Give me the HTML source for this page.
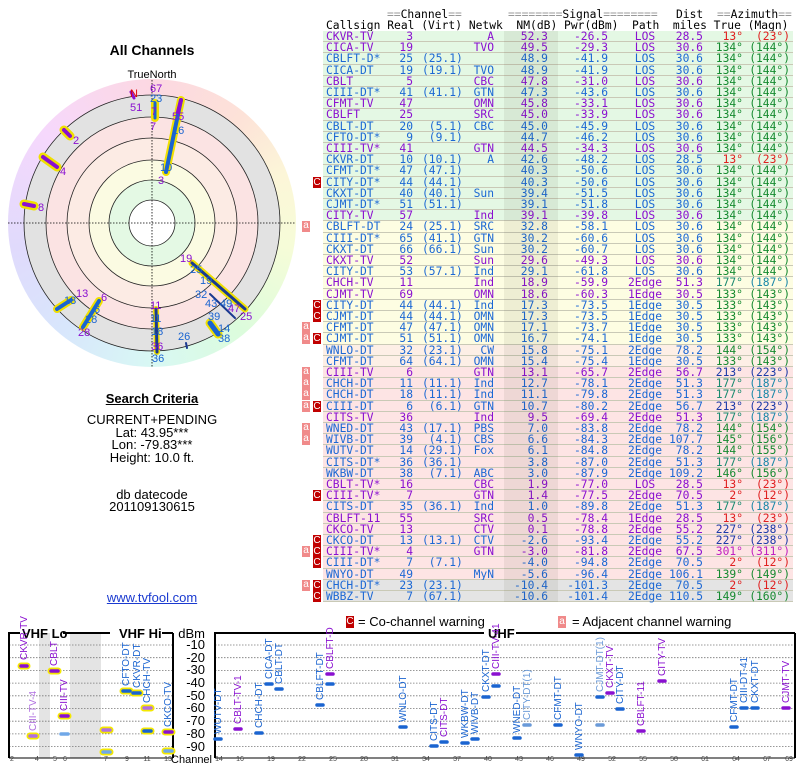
<!DOCTYPE html>
<html><head><meta charset="utf-8">
<style>
*{margin:0;padding:0;box-sizing:border-box}
body{width:800px;height:768px;background:#fff;position:relative;overflow:hidden;font-family:"Liberation Sans",sans-serif;color:#000}
.h{position:absolute;font-family:"DejaVu Sans Mono",monospace;font-size:11.3px;line-height:12px;white-space:pre}
.eq{color:#999}
.r{position:absolute;left:323px;width:470px;height:11.2px;border-bottom:1px solid #c9c9b6;font-family:"DejaVu Sans Mono",monospace;font-size:11.3px;line-height:11px;white-space:pre}
.r span{position:absolute;top:0}
.g{background:#e4f8e4}.y{background:#fdfde2}.o{background:#fdefe6}.k{background:#fde4e4}.x{background:#e4e4e4}
.p{color:#8a10d0}.b{color:#1c68d4}
.c{left:3px}
.re{left:50px;width:40px;text-align:right}
.v{left:99px}
.n{left:131px;width:40px;text-align:right}
.nm{left:185px;width:40px;text-align:right}
.pw{left:230px;width:55px;text-align:right}
.pa{left:297px;width:50px;text-align:center}
.d{left:330px;width:50px;text-align:right}
.t{left:385px;width:35px;text-align:right}
.m{left:420px;width:47px;text-align:right}
.gr .t,.gr .m{color:#168a30}
.rd .t,.rd .m{color:#e02020}
.tl .t{color:#1a8a70}.tl .m{color:#1a88a8}
.db .t,.db .m{color:#1c3aa8}
.mg .t,.mg .m{color:#c020c0}
.fc{position:absolute;left:-10px;top:0;width:8px;height:11px;background:#c00000;color:#fff;font-family:"Liberation Sans",sans-serif;font-size:10px;line-height:11px;text-align:center}
.fa{position:absolute;left:-21px;top:0;width:8px;height:11px;background:#f08a8a;color:#fff;font-family:"Liberation Sans",sans-serif;font-size:10px;line-height:10px;text-align:center}
.t1{position:absolute;left:0;width:304px;text-align:center;font-size:13px;line-height:13px}
</style></head><body>

<div class="h" style="left:387px;top:9px"><span class="eq">==</span>Channel<span class="eq">==</span></div>
<div class="h" style="left:508px;top:9px"><span class="eq">========</span>Signal<span class="eq">========</span></div>
<div class="h" style="left:676px;top:9px">Dist</div>
<div class="h" style="left:717px;top:9px"><span class="eq">==</span>Azimuth<span class="eq">==</span></div>
<div class="h" style="left:326px;top:20px">Callsign Real (Virt) Netwk  NM(dB) Pwr(dBm)  Path  miles True (Magn)</div>

<div class="r g p rd" style="top:31px"><span class="c">CKVR-TV</span><span class="re">3</span><span class="n">A</span><span class="nm">52.3</span><span class="pw">-26.5</span><span class="pa">LOS</span><span class="d">28.5</span><span class="t">13°</span><span class="m">(23°)</span></div>
<div class="r g p gr" style="top:42.2px"><span class="c">CICA-TV</span><span class="re">19</span><span class="n">TVO</span><span class="nm">49.5</span><span class="pw">-29.3</span><span class="pa">LOS</span><span class="d">30.6</span><span class="t">134°</span><span class="m">(144°)</span></div>
<div class="r g b gr" style="top:53.4px"><span class="c">CBLFT-D*</span><span class="re">25</span><span class="v">(25.1)</span><span class="nm">48.9</span><span class="pw">-41.9</span><span class="pa">LOS</span><span class="d">30.6</span><span class="t">134°</span><span class="m">(144°)</span></div>
<div class="r g b gr" style="top:64.6px"><span class="c">CICA-DT</span><span class="re">19</span><span class="v">(19.1)</span><span class="n">TVO</span><span class="nm">48.9</span><span class="pw">-41.9</span><span class="pa">LOS</span><span class="d">30.6</span><span class="t">134°</span><span class="m">(144°)</span></div>
<div class="r g p gr" style="top:75.8px"><span class="c">CBLT</span><span class="re">5</span><span class="n">CBC</span><span class="nm">47.8</span><span class="pw">-31.0</span><span class="pa">LOS</span><span class="d">30.6</span><span class="t">134°</span><span class="m">(144°)</span></div>
<div class="r g b gr" style="top:87px"><span class="c">CIII-DT*</span><span class="re">41</span><span class="v">(41.1)</span><span class="n">GTN</span><span class="nm">47.3</span><span class="pw">-43.6</span><span class="pa">LOS</span><span class="d">30.6</span><span class="t">134°</span><span class="m">(144°)</span></div>
<div class="r g p gr" style="top:98.2px"><span class="c">CFMT-TV</span><span class="re">47</span><span class="n">OMN</span><span class="nm">45.8</span><span class="pw">-33.1</span><span class="pa">LOS</span><span class="d">30.6</span><span class="t">134°</span><span class="m">(144°)</span></div>
<div class="r g p gr" style="top:109.4px"><span class="c">CBLFT</span><span class="re">25</span><span class="n">SRC</span><span class="nm">45.0</span><span class="pw">-33.9</span><span class="pa">LOS</span><span class="d">30.6</span><span class="t">134°</span><span class="m">(144°)</span></div>
<div class="r g b gr" style="top:120.6px"><span class="c">CBLT-DT</span><span class="re">20</span><span class="v"> (5.1)</span><span class="n">CBC</span><span class="nm">45.0</span><span class="pw">-45.9</span><span class="pa">LOS</span><span class="d">30.6</span><span class="t">134°</span><span class="m">(144°)</span></div>
<div class="r g b gr" style="top:131.8px"><span class="c">CFTO-DT*</span><span class="re">9</span><span class="v"> (9.1)</span><span class="nm">44.7</span><span class="pw">-46.2</span><span class="pa">LOS</span><span class="d">30.6</span><span class="t">134°</span><span class="m">(144°)</span></div>
<div class="r g p gr" style="top:143px"><span class="c">CIII-TV*</span><span class="re">41</span><span class="n">GTN</span><span class="nm">44.5</span><span class="pw">-34.3</span><span class="pa">LOS</span><span class="d">30.6</span><span class="t">134°</span><span class="m">(144°)</span></div>
<div class="r g b rd" style="top:154.2px"><span class="c">CKVR-DT</span><span class="re">10</span><span class="v">(10.1)</span><span class="n">A</span><span class="nm">42.6</span><span class="pw">-48.2</span><span class="pa">LOS</span><span class="d">28.5</span><span class="t">13°</span><span class="m">(23°)</span></div>
<div class="r g b gr" style="top:165.4px"><span class="c">CFMT-DT*</span><span class="re">47</span><span class="v">(47.1)</span><span class="nm">40.3</span><span class="pw">-50.6</span><span class="pa">LOS</span><span class="d">30.6</span><span class="t">134°</span><span class="m">(144°)</span></div>
<div class="r g b gr" style="top:176.6px"><span class="fc">C</span><span class="c">CITY-DT*</span><span class="re">44</span><span class="v">(44.1)</span><span class="nm">40.3</span><span class="pw">-50.6</span><span class="pa">LOS</span><span class="d">30.6</span><span class="t">134°</span><span class="m">(144°)</span></div>
<div class="r g b gr" style="top:187.8px"><span class="c">CKXT-DT</span><span class="re">40</span><span class="v">(40.1)</span><span class="n">Sun</span><span class="nm">39.4</span><span class="pw">-51.5</span><span class="pa">LOS</span><span class="d">30.6</span><span class="t">134°</span><span class="m">(144°)</span></div>
<div class="r g b gr" style="top:199px"><span class="c">CJMT-DT*</span><span class="re">51</span><span class="v">(51.1)</span><span class="nm">39.1</span><span class="pw">-51.8</span><span class="pa">LOS</span><span class="d">30.6</span><span class="t">134°</span><span class="m">(144°)</span></div>
<div class="r g p gr" style="top:210.2px"><span class="c">CITY-TV</span><span class="re">57</span><span class="n">Ind</span><span class="nm">39.1</span><span class="pw">-39.8</span><span class="pa">LOS</span><span class="d">30.6</span><span class="t">134°</span><span class="m">(144°)</span></div>
<div class="r y b gr" style="top:221.4px"><span class="fa">a</span><span class="c">CBLFT-DT</span><span class="re">24</span><span class="v">(25.1)</span><span class="n">SRC</span><span class="nm">32.8</span><span class="pw">-58.1</span><span class="pa">LOS</span><span class="d">30.6</span><span class="t">134°</span><span class="m">(144°)</span></div>
<div class="r y b gr" style="top:232.6px"><span class="c">CIII-DT*</span><span class="re">65</span><span class="v">(41.1)</span><span class="n">GTN</span><span class="nm">30.2</span><span class="pw">-60.6</span><span class="pa">LOS</span><span class="d">30.6</span><span class="t">134°</span><span class="m">(144°)</span></div>
<div class="r y b gr" style="top:243.8px"><span class="c">CKXT-DT</span><span class="re">66</span><span class="v">(66.1)</span><span class="n">Sun</span><span class="nm">30.2</span><span class="pw">-60.7</span><span class="pa">LOS</span><span class="d">30.6</span><span class="t">134°</span><span class="m">(144°)</span></div>
<div class="r y p gr" style="top:255px"><span class="c">CKXT-TV</span><span class="re">52</span><span class="n">Sun</span><span class="nm">29.6</span><span class="pw">-49.3</span><span class="pa">LOS</span><span class="d">30.6</span><span class="t">134°</span><span class="m">(144°)</span></div>
<div class="r y b gr" style="top:266.2px"><span class="c">CITY-DT</span><span class="re">53</span><span class="v">(57.1)</span><span class="n">Ind</span><span class="nm">29.1</span><span class="pw">-61.8</span><span class="pa">LOS</span><span class="d">30.6</span><span class="t">134°</span><span class="m">(144°)</span></div>
<div class="r y p tl" style="top:277.4px"><span class="c">CHCH-TV</span><span class="re">11</span><span class="n">Ind</span><span class="nm">18.9</span><span class="pw">-59.9</span><span class="pa">2Edge</span><span class="d">51.3</span><span class="t">177°</span><span class="m">(187°)</span></div>
<div class="r y p gr" style="top:288.6px"><span class="c">CJMT-TV</span><span class="re">69</span><span class="n">OMN</span><span class="nm">18.6</span><span class="pw">-60.3</span><span class="pa">1Edge</span><span class="d">30.5</span><span class="t">133°</span><span class="m">(143°)</span></div>
<div class="r y b gr" style="top:299.8px"><span class="fc">C</span><span class="c">CITY-DT</span><span class="re">44</span><span class="v">(44.1)</span><span class="n">Ind</span><span class="nm">17.3</span><span class="pw">-73.5</span><span class="pa">1Edge</span><span class="d">30.5</span><span class="t">133°</span><span class="m">(143°)</span></div>
<div class="r y b gr" style="top:311px"><span class="fc">C</span><span class="c">CJMT-DT</span><span class="re">44</span><span class="v">(44.1)</span><span class="n">OMN</span><span class="nm">17.3</span><span class="pw">-73.5</span><span class="pa">1Edge</span><span class="d">30.5</span><span class="t">133°</span><span class="m">(143°)</span></div>
<div class="r y b gr" style="top:322.2px"><span class="fa">a</span><span class="c">CFMT-DT</span><span class="re">47</span><span class="v">(47.1)</span><span class="n">OMN</span><span class="nm">17.1</span><span class="pw">-73.7</span><span class="pa">1Edge</span><span class="d">30.5</span><span class="t">133°</span><span class="m">(143°)</span></div>
<div class="r y b gr" style="top:333.4px"><span class="fa">a</span><span class="fc">C</span><span class="c">CJMT-DT</span><span class="re">51</span><span class="v">(51.1)</span><span class="n">OMN</span><span class="nm">16.7</span><span class="pw">-74.1</span><span class="pa">1Edge</span><span class="d">30.5</span><span class="t">133°</span><span class="m">(143°)</span></div>
<div class="r o b gr" style="top:344.6px"><span class="c">WNLO-DT</span><span class="re">32</span><span class="v">(23.1)</span><span class="n">CW</span><span class="nm">15.8</span><span class="pw">-75.1</span><span class="pa">2Edge</span><span class="d">78.2</span><span class="t">144°</span><span class="m">(154°)</span></div>
<div class="r o b gr" style="top:355.8px"><span class="c">CFMT-DT</span><span class="re">64</span><span class="v">(64.1)</span><span class="n">OMN</span><span class="nm">15.4</span><span class="pw">-75.4</span><span class="pa">1Edge</span><span class="d">30.5</span><span class="t">133°</span><span class="m">(143°)</span></div>
<div class="r k p db" style="top:367px"><span class="fa">a</span><span class="c">CIII-TV</span><span class="re">6</span><span class="n">GTN</span><span class="nm">13.1</span><span class="pw">-65.7</span><span class="pa">2Edge</span><span class="d">56.7</span><span class="t">213°</span><span class="m">(223°)</span></div>
<div class="r k b tl" style="top:378.2px"><span class="fa">a</span><span class="c">CHCH-DT</span><span class="re">11</span><span class="v">(11.1)</span><span class="n">Ind</span><span class="nm">12.7</span><span class="pw">-78.1</span><span class="pa">2Edge</span><span class="d">51.3</span><span class="t">177°</span><span class="m">(187°)</span></div>
<div class="r k b tl" style="top:389.4px"><span class="fa">a</span><span class="c">CHCH-DT</span><span class="re">18</span><span class="v">(11.1)</span><span class="n">Ind</span><span class="nm">11.1</span><span class="pw">-79.8</span><span class="pa">2Edge</span><span class="d">51.3</span><span class="t">177°</span><span class="m">(187°)</span></div>
<div class="r k b db" style="top:400.6px"><span class="fa">a</span><span class="fc">C</span><span class="c">CIII-DT</span><span class="re">6</span><span class="v"> (6.1)</span><span class="n">GTN</span><span class="nm">10.7</span><span class="pw">-80.2</span><span class="pa">2Edge</span><span class="d">56.7</span><span class="t">213°</span><span class="m">(223°)</span></div>
<div class="r k p tl" style="top:411.8px"><span class="c">CITS-TV</span><span class="re">36</span><span class="n">Ind</span><span class="nm">9.5</span><span class="pw">-69.4</span><span class="pa">2Edge</span><span class="d">51.3</span><span class="t">177°</span><span class="m">(187°)</span></div>
<div class="r k b gr" style="top:423px"><span class="fa">a</span><span class="c">WNED-DT</span><span class="re">43</span><span class="v">(17.1)</span><span class="n">PBS</span><span class="nm">7.0</span><span class="pw">-83.8</span><span class="pa">2Edge</span><span class="d">78.2</span><span class="t">144°</span><span class="m">(154°)</span></div>
<div class="r k b gr" style="top:434.2px"><span class="fa">a</span><span class="c">WIVB-DT</span><span class="re">39</span><span class="v"> (4.1)</span><span class="n">CBS</span><span class="nm">6.6</span><span class="pw">-84.3</span><span class="pa">2Edge</span><span class="d">107.7</span><span class="t">145°</span><span class="m">(156°)</span></div>
<div class="r k b gr" style="top:445.4px"><span class="c">WUTV-DT</span><span class="re">14</span><span class="v">(29.1)</span><span class="n">Fox</span><span class="nm">6.1</span><span class="pw">-84.8</span><span class="pa">2Edge</span><span class="d">78.2</span><span class="t">144°</span><span class="m">(155°)</span></div>
<div class="r k b tl" style="top:456.6px"><span class="c">CITS-DT*</span><span class="re">36</span><span class="v">(36.1)</span><span class="nm">3.8</span><span class="pw">-87.0</span><span class="pa">2Edge</span><span class="d">51.3</span><span class="t">177°</span><span class="m">(187°)</span></div>
<div class="r k b gr" style="top:467.8px"><span class="c">WKBW-DT</span><span class="re">38</span><span class="v"> (7.1)</span><span class="n">ABC</span><span class="nm">3.0</span><span class="pw">-87.9</span><span class="pa">2Edge</span><span class="d">109.2</span><span class="t">146°</span><span class="m">(156°)</span></div>
<div class="r k p rd" style="top:479px"><span class="c">CBLT-TV*</span><span class="re">16</span><span class="n">CBC</span><span class="nm">1.9</span><span class="pw">-77.0</span><span class="pa">LOS</span><span class="d">28.5</span><span class="t">13°</span><span class="m">(23°)</span></div>
<div class="r k p rd" style="top:490.2px"><span class="fc">C</span><span class="c">CIII-TV*</span><span class="re">7</span><span class="n">GTN</span><span class="nm">1.4</span><span class="pw">-77.5</span><span class="pa">2Edge</span><span class="d">70.5</span><span class="t">2°</span><span class="m">(12°)</span></div>
<div class="r k b tl" style="top:501.4px"><span class="c">CITS-DT</span><span class="re">35</span><span class="v">(36.1)</span><span class="n">Ind</span><span class="nm">1.0</span><span class="pw">-89.8</span><span class="pa">2Edge</span><span class="d">51.3</span><span class="t">177°</span><span class="m">(187°)</span></div>
<div class="r k p rd" style="top:512.6px"><span class="c">CBLFT-11</span><span class="re">55</span><span class="n">SRC</span><span class="nm">0.5</span><span class="pw">-78.4</span><span class="pa">1Edge</span><span class="d">28.5</span><span class="t">13°</span><span class="m">(23°)</span></div>
<div class="r k p db" style="top:523.8px"><span class="c">CKCO-TV</span><span class="re">13</span><span class="n">CTV</span><span class="nm">0.1</span><span class="pw">-78.8</span><span class="pa">2Edge</span><span class="d">55.2</span><span class="t">227°</span><span class="m">(238°)</span></div>
<div class="r k b db" style="top:535px"><span class="fc">C</span><span class="c">CKCO-DT</span><span class="re">13</span><span class="v">(13.1)</span><span class="n">CTV</span><span class="nm">-2.6</span><span class="pw">-93.4</span><span class="pa">2Edge</span><span class="d">55.2</span><span class="t">227°</span><span class="m">(238°)</span></div>
<div class="r k p mg" style="top:546.2px"><span class="fa">a</span><span class="fc">C</span><span class="c">CIII-TV*</span><span class="re">4</span><span class="n">GTN</span><span class="nm">-3.0</span><span class="pw">-81.8</span><span class="pa">2Edge</span><span class="d">67.5</span><span class="t">301°</span><span class="m">(311°)</span></div>
<div class="r k b rd" style="top:557.4px"><span class="fc">C</span><span class="c">CIII-DT*</span><span class="re">7</span><span class="v"> (7.1)</span><span class="nm">-4.0</span><span class="pw">-94.8</span><span class="pa">2Edge</span><span class="d">70.5</span><span class="t">2°</span><span class="m">(12°)</span></div>
<div class="r k b gr" style="top:568.6px"><span class="c">WNYO-DT</span><span class="re">49</span><span class="n">MyN</span><span class="nm">-5.6</span><span class="pw">-96.4</span><span class="pa">2Edge</span><span class="d">106.1</span><span class="t">139°</span><span class="m">(149°)</span></div>
<div class="r x b rd" style="top:579.8px"><span class="fa">a</span><span class="fc">C</span><span class="c">CHCH-DT*</span><span class="re">23</span><span class="v">(23.1)</span><span class="nm">-10.4</span><span class="pw">-101.3</span><span class="pa">2Edge</span><span class="d">70.5</span><span class="t">2°</span><span class="m">(12°)</span></div>
<div class="r x b gr" style="top:591px"><span class="fc">C</span><span class="c">WBBZ-TV</span><span class="re">7</span><span class="v">(67.1)</span><span class="nm">-10.6</span><span class="pw">-101.4</span><span class="pa">2Edge</span><span class="d">110.5</span><span class="t">149°</span><span class="m">(160°)</span></div>
<div style="position:absolute;left:504px;top:31px;width:54px;height:571px;background:rgba(60,60,40,0.08)"></div>

<div class="t1" style="top:44px;font-weight:bold;font-size:14px">All Channels</div>
<div class="t1" style="top:69px;font-size:11px">TrueNorth</div>
<div style="position:absolute;left:8px;top:79px;width:288px;height:288px;border-radius:50%;background:conic-gradient(#fcd8e2,#fde2d8 40deg,#fcf6d8 70deg,#f6fcd8 100deg,#dcfcdc 140deg,#d8f8f4 180deg,#d8e6fc 220deg,#e0dafc 260deg,#f6d8fc 310deg,#fcd8e2)"></div>
<svg style="position:absolute;left:0;top:0" width="304" height="380">
<circle cx="152" cy="223" r="128" fill="#e2e2e2" stroke="#222" stroke-width="0.8"/>
<circle cx="152" cy="223" r="106" fill="#fbe3e3" stroke="#222" stroke-width="0.8"/>
<circle cx="152" cy="223" r="85" fill="#fcebe4" stroke="#222" stroke-width="0.8"/>
<circle cx="152" cy="223" r="63" fill="#fbfbe2" stroke="#222" stroke-width="0.8"/>
<circle cx="152" cy="223" r="43" fill="#e4f9e4" stroke="#222" stroke-width="0.8"/>
<circle cx="152" cy="223" r="23" fill="#fff" stroke="#222" stroke-width="0.8"/>
<line x1="8" y1="223" x2="296" y2="223" stroke="#000" stroke-width="0.8" stroke-dasharray="1.5,1.5"/>
<line x1="152" y1="80" x2="152" y2="368" stroke="#000" stroke-width="0.8" stroke-dasharray="1.5,1.5"/>
<g stroke-linecap="round">
<line x1="166" y1="172" x2="181" y2="100" stroke="#f0e000" stroke-width="8"/>
<line x1="166" y1="172" x2="181" y2="100" stroke="#1a64d0" stroke-width="4"/>
<line x1="178" y1="112" x2="181" y2="100" stroke="#8a10d0" stroke-width="4"/>
<line x1="155" y1="103" x2="155" y2="118" stroke="#f0e000" stroke-width="8"/>
<line x1="155" y1="103" x2="155" y2="118" stroke="#1a64d0" stroke-width="3"/>
<line x1="64" y1="130" x2="70" y2="136" stroke="#f0e000" stroke-width="9"/>
<line x1="64" y1="130" x2="70" y2="136" stroke="#8a10d0" stroke-width="4"/>
<line x1="43" y1="157" x2="57" y2="167" stroke="#f0e000" stroke-width="9"/>
<line x1="43" y1="157" x2="57" y2="167" stroke="#8a10d0" stroke-width="4"/>
<line x1="24" y1="204" x2="34" y2="206" stroke="#f0e000" stroke-width="9"/>
<line x1="24" y1="204" x2="34" y2="206" stroke="#8a10d0" stroke-width="4"/>
<line x1="57" y1="309" x2="71" y2="300" stroke="#f0e000" stroke-width="8"/>
<line x1="57" y1="309" x2="71" y2="300" stroke="#1a64d0" stroke-width="4"/>
<line x1="83" y1="327" x2="99" y2="301" stroke="#f0e000" stroke-width="8"/>
<line x1="83" y1="327" x2="99" y2="301" stroke="#1a64d0" stroke-width="4"/>
<line x1="156" y1="309" x2="157" y2="352" stroke="#f0e000" stroke-width="6"/>
<line x1="156" y1="309" x2="157" y2="352" stroke="#1a3a90" stroke-width="3"/>
<line x1="192" y1="263" x2="245" y2="309" stroke="#f0e000" stroke-width="7"/>
<line x1="192" y1="263" x2="245" y2="309" stroke="#1a3a90" stroke-width="3"/>
<line x1="210" y1="294" x2="235" y2="318" stroke="#1a3a90" stroke-width="2"/>
<line x1="210" y1="323" x2="218" y2="334" stroke="#f0e000" stroke-width="9"/>
<line x1="210" y1="323" x2="218" y2="334" stroke="#1a64d0" stroke-width="5"/>
<line x1="186" y1="343" x2="187" y2="348" stroke="#1a3a90" stroke-width="2"/>
<line x1="131" y1="92" x2="134" y2="98" stroke="#8a10d0" stroke-width="3"/>
</g>
<g font-family="Liberation Sans,sans-serif" font-size="11">
<text x="130" y="97" fill="#d00">N</text>
<text x="130" y="111" fill="#8a10d0">51</text>
<text x="150" y="92" fill="#8a10d0">67</text><text x="150" y="102" fill="#1a64d0">23</text>
<text x="150" y="130" fill="#8a10d0">7</text><text x="151" y="115" fill="#8a10d0">7</text>
<text x="172" y="120" fill="#8a10d0">55</text><text x="172" y="134" fill="#1a64d0">16</text>
<text x="160" y="171" fill="#1a64d0">10</text><text x="158" y="184" fill="#8a10d0">3</text>
<text x="73" y="144" fill="#8a10d0">2</text><text x="60" y="175" fill="#8a10d0">4</text><text x="38" y="211" fill="#8a10d0">8</text>
<text x="180" y="262" fill="#8a10d0">19</text><text x="190" y="273" fill="#1a64d0">25</text><text x="200" y="284" fill="#1a64d0">19</text>
<text x="195" y="298" fill="#1a64d0">32</text><text x="205" y="307" fill="#1a64d0">43</text><text x="220" y="307" fill="#1a64d0">49</text>
<text x="228" y="312" fill="#8a10d0">47</text><text x="240" y="320" fill="#8a10d0">25</text>
<text x="208" y="320" fill="#1a64d0">39</text><text x="218" y="332" fill="#1a64d0">14</text><text x="218" y="342" fill="#1a64d0">38</text>
<text x="76" y="297" fill="#8a10d0">13</text><text x="64" y="304" fill="#1a64d0">13</text>
<text x="101" y="301" fill="#8a10d0">6</text><text x="94" y="313" fill="#1a64d0">6</text><text x="85" y="323" fill="#1a64d0">28</text><text x="78" y="336" fill="#8a10d0">28</text>
<text x="150" y="309" fill="#8a10d0">11</text><text x="150" y="322" fill="#1a64d0">11</text><text x="151" y="335" fill="#1a64d0">18</text>
<text x="151" y="350" fill="#8a10d0">36</text><text x="152" y="362" fill="#1a64d0">36</text>
<text x="178" y="340" fill="#1a64d0">26</text>
</g>
</svg>

<div class="t1" style="top:392px;font-weight:bold;text-decoration:underline">Search Criteria</div>
<div class="t1" style="top:413px">CURRENT+PENDING</div>
<div class="t1" style="top:426px">Lat: 43.95***</div>
<div class="t1" style="top:438px">Lon: -79.83***</div>
<div class="t1" style="top:451px">Height: 10.0 ft.</div>
<div class="t1" style="top:488px">db datecode</div>
<div class="t1" style="top:500px">201109130615</div>
<div class="t1" style="top:591px;color:#1a3ad0;text-decoration:underline">www.tvfool.com</div>

<div style="position:absolute;left:346px;top:616px;width:8px;height:12px;background:#c00000;color:#fff;font-size:10px;text-align:center;line-height:12px">C</div>
<div style="position:absolute;left:358px;top:614px;font-size:13px">= Co-channel warning</div>
<div style="position:absolute;left:558px;top:616px;width:8px;height:12px;background:#f08a8a;color:#fff;font-size:10px;text-align:center;line-height:11px">a</div>
<div style="position:absolute;left:572px;top:614px;font-size:13px">= Adjacent channel warning</div>

<svg style="position:absolute;left:0;top:600px" width="800" height="168" font-family="Liberation Sans,sans-serif">
<rect x="39" y="33" width="11" height="125" fill="#e4e4e4"/>
<rect x="70" y="33" width="31" height="125" fill="#e4e4e4"/>
<g stroke="#777" stroke-width="0.8" stroke-dasharray="1.5,1.5">
<line x1="9" y1="45" x2="172" y2="45"/><line x1="9" y1="57.7" x2="172" y2="57.7"/><line x1="9" y1="70.4" x2="172" y2="70.4"/><line x1="9" y1="83.1" x2="172" y2="83.1"/><line x1="9" y1="95.8" x2="172" y2="95.8"/><line x1="9" y1="108.5" x2="172" y2="108.5"/><line x1="9" y1="121.2" x2="172" y2="121.2"/><line x1="9" y1="133.9" x2="172" y2="133.9"/><line x1="9" y1="146.6" x2="172" y2="146.6"/>
<line x1="215" y1="45" x2="794" y2="45"/><line x1="215" y1="57.7" x2="794" y2="57.7"/><line x1="215" y1="70.4" x2="794" y2="70.4"/><line x1="215" y1="83.1" x2="794" y2="83.1"/><line x1="215" y1="95.8" x2="794" y2="95.8"/><line x1="215" y1="108.5" x2="794" y2="108.5"/><line x1="215" y1="121.2" x2="794" y2="121.2"/><line x1="215" y1="133.9" x2="794" y2="133.9"/><line x1="215" y1="146.6" x2="794" y2="146.6"/>
</g>
<g stroke="#000" stroke-width="2" fill="none">
<polyline points="9,158 9,33 20,33"/><line x1="63" y1="33" x2="110" y2="33"/><line x1="162" y1="33" x2="173" y2="33"/><line x1="173" y1="33" x2="173" y2="158"/>
<polyline points="215,158 215,33 484,33"/><line x1="516" y1="33" x2="795" y2="33"/><line x1="795" y1="33" x2="795" y2="158"/>
<line x1="9" y1="158" x2="173" y2="158" stroke-width="1"/><line x1="215" y1="158" x2="795" y2="158" stroke-width="1"/>
</g>
<g font-weight="bold" font-size="13"><text x="22" y="38">VHF Lo</text><text x="119" y="38">VHF Hi</text><text x="488" y="38">UHF</text></g>
<g font-size="13" text-anchor="end"><text x="205" y="38">dBm</text><text x="205" y="49">-10</text><text x="205" y="62">-20</text><text x="205" y="74">-30</text><text x="205" y="87">-40</text><text x="205" y="100">-50</text><text x="205" y="112">-60</text><text x="205" y="125">-70</text><text x="205" y="138">-80</text><text x="205" y="151">-90</text><text x="212" y="163" font-size="11">Channel</text></g>
<g font-size="7" fill="#444" text-anchor="middle">
<text x="12" y="161">2</text><text x="37" y="161">4</text><text x="55" y="161">5</text><text x="65" y="161">6</text><text x="106" y="161">7</text><text x="127" y="161">9</text><text x="147" y="161">11</text><text x="168" y="161">13</text>
<text x="219" y="161">14</text><text x="240" y="161">16</text><text x="271" y="161">19</text><text x="302" y="161">22</text><text x="333" y="161">25</text><text x="364" y="161">28</text><text x="395" y="161">31</text><text x="426" y="161">34</text><text x="457" y="161">37</text><text x="488" y="161">40</text><text x="519" y="161">43</text><text x="550" y="161">46</text><text x="581" y="161">49</text><text x="612" y="161">52</text><text x="643" y="161">55</text><text x="674" y="161">58</text><text x="705" y="161">61</text><text x="736" y="161">64</text><text x="767" y="161">67</text><text x="789" y="161">69</text>
</g>
<g stroke-linecap="round">
<g stroke="#f4e800" stroke-width="7">
<line x1="21" y1="66" x2="27" y2="66"/><line x1="51" y1="71" x2="58" y2="71"/><line x1="61" y1="116" x2="68" y2="116"/><line x1="30" y1="136" x2="36" y2="136"/><line x1="103" y1="152" x2="110" y2="152"/><line x1="103" y1="130" x2="110" y2="130"/><line x1="123" y1="91" x2="130" y2="91"/><line x1="133" y1="93" x2="140" y2="93"/><line x1="144" y1="108" x2="151" y2="108"/><line x1="144" y1="131" x2="151" y2="131"/><line x1="165" y1="132" x2="172" y2="132"/><line x1="165" y1="151" x2="172" y2="151"/>
</g>
<g stroke-width="3.5">
<line x1="21" y1="66" x2="27" y2="66" stroke="#8a10d0"/><line x1="51" y1="71" x2="58" y2="71" stroke="#8a10d0"/><line x1="61" y1="116" x2="68" y2="116" stroke="#8a10d0"/><line x1="30" y1="136" x2="36" y2="136" stroke="#b070e0"/><line x1="61" y1="134" x2="68" y2="134" stroke="#70a8e8"/><line x1="103" y1="152" x2="110" y2="152" stroke="#70a8e8"/><line x1="103" y1="130" x2="110" y2="130" stroke="#b070e0"/><line x1="123" y1="91" x2="130" y2="91" stroke="#1a64d0"/><line x1="133" y1="93" x2="140" y2="93" stroke="#1a64d0"/><line x1="144" y1="108" x2="151" y2="108" stroke="#b070e0"/><line x1="144" y1="131" x2="151" y2="131" stroke="#1a64d0"/><line x1="165" y1="132" x2="172" y2="132" stroke="#8a10d0"/><line x1="165" y1="151" x2="172" y2="151" stroke="#70a8e8"/>
<g stroke="#1a64d0">
<line x1="215" y1="139" x2="221" y2="139"/><line x1="256" y1="133" x2="262" y2="133"/><line x1="266" y1="84" x2="272" y2="84"/><line x1="276" y1="89" x2="282" y2="89"/><line x1="317" y1="105" x2="323" y2="105"/><line x1="327" y1="84" x2="333" y2="84"/><line x1="400" y1="127" x2="406" y2="127"/><line x1="431" y1="146" x2="437" y2="146"/><line x1="441" y1="142" x2="447" y2="142"/><line x1="462" y1="143" x2="468" y2="143"/><line x1="472" y1="139" x2="478" y2="139"/><line x1="483" y1="97" x2="489" y2="97"/><line x1="493" y1="86" x2="499" y2="86"/><line x1="514" y1="138" x2="520" y2="138"/><line x1="555" y1="125" x2="561" y2="125"/><line x1="576" y1="155" x2="582" y2="155"/><line x1="597" y1="97" x2="603" y2="97"/><line x1="617" y1="109" x2="623" y2="109"/><line x1="731" y1="127" x2="737" y2="127"/><line x1="741" y1="108" x2="747" y2="108"/><line x1="752" y1="108" x2="758" y2="108"/>
</g>
<g stroke="#6a9ad8"><line x1="524" y1="125" x2="530" y2="125"/><line x1="597" y1="125" x2="603" y2="125"/></g>
<g stroke="#8a10d0">
<line x1="235" y1="129" x2="241" y2="129"/><line x1="327" y1="74" x2="333" y2="74"/><line x1="493" y1="74" x2="499" y2="74"/><line x1="607" y1="93" x2="613" y2="93"/><line x1="638" y1="131" x2="644" y2="131"/><line x1="659" y1="81" x2="665" y2="81"/><line x1="783" y1="108" x2="789" y2="108"/>
</g>
</g>
</g>
<g font-size="10">
<text transform="translate(27,60) rotate(-90)" fill="#8a10d0">CKVR-TV</text>
<text transform="translate(57,66) rotate(-90)" fill="#8a10d0">CBLT</text>
<text transform="translate(67,111) rotate(-90)" fill="#8a10d0">CIII-TV</text>
<text transform="translate(36,131) rotate(-90)" fill="#b070e0">CIII-TV-4</text>
<text transform="translate(129,86) rotate(-90)" fill="#1a64d0">CFTO-DT</text>
<text transform="translate(140,88) rotate(-90)" fill="#1a64d0">CKVR-DT</text>
<text transform="translate(150,103) rotate(-90)" fill="#1a64d0">CHCH-TV</text>
<text transform="translate(171,127) rotate(-90)" fill="#1a64d0">CKCO-TV</text>
<text transform="translate(221,134) rotate(-90)" fill="#1a64d0">WUTV-DT</text>
<text transform="translate(241,124) rotate(-90)" fill="#8a10d0">CBLT-TV-1</text>
<text transform="translate(262,128) rotate(-90)" fill="#1a64d0">CHCH-DT</text>
<text transform="translate(272,79) rotate(-90)" fill="#1a64d0">CICA-DT</text>
<text transform="translate(282,84) rotate(-90)" fill="#1a64d0">CBLT-DT</text>
<text transform="translate(323,100) rotate(-90)" fill="#1a64d0">CBLFT-DT</text>
<text transform="translate(333,69) rotate(-90)" fill="#8a10d0">CBLFT-D</text>
<text transform="translate(406,122) rotate(-90)" fill="#1a64d0">WNLO-DT</text>
<text transform="translate(437,141) rotate(-90)" fill="#1a64d0">CITS-DT</text>
<text transform="translate(447,137) rotate(-90)" fill="#8a10d0">CITS-DT</text>
<text transform="translate(468,138) rotate(-90)" fill="#1a64d0">WKBW-DT</text>
<text transform="translate(478,134) rotate(-90)" fill="#1a64d0">WIVB-DT</text>
<text transform="translate(489,92) rotate(-90)" fill="#1a64d0">CKXT-DT</text>
<text transform="translate(499,69) rotate(-90)" fill="#8a10d0">CIII-TV-41</text>
<text transform="translate(520,133) rotate(-90)" fill="#1a64d0">WNED-DT</text>
<text transform="translate(530,120) rotate(-90)" fill="#6a9ad8">CITY-DT(1)</text>
<text transform="translate(561,120) rotate(-90)" fill="#1a64d0">CFMT-DT</text>
<text transform="translate(582,150) rotate(-90)" fill="#1a64d0">WNYO-DT</text>
<text transform="translate(603,92) rotate(-90)" fill="#6a9ad8">CJMT-DT(1)</text>
<text transform="translate(613,88) rotate(-90)" fill="#8a10d0">CKXT-TV</text>
<text transform="translate(623,104) rotate(-90)" fill="#1a64d0">CITY-DT</text>
<text transform="translate(644,126) rotate(-90)" fill="#8a10d0">CBLFT-11</text>
<text transform="translate(665,76) rotate(-90)" fill="#8a10d0">CITY-TV</text>
<text transform="translate(737,122) rotate(-90)" fill="#1a64d0">CFMT-DT</text>
<text transform="translate(747,103) rotate(-90)" fill="#1a64d0">CIII-DT-41</text>
<text transform="translate(758,103) rotate(-90)" fill="#1a64d0">CKXT-DT</text>
<text transform="translate(789,103) rotate(-90)" fill="#8a10d0">CJMT-TV</text>
</g>
</svg>
</body></html>
